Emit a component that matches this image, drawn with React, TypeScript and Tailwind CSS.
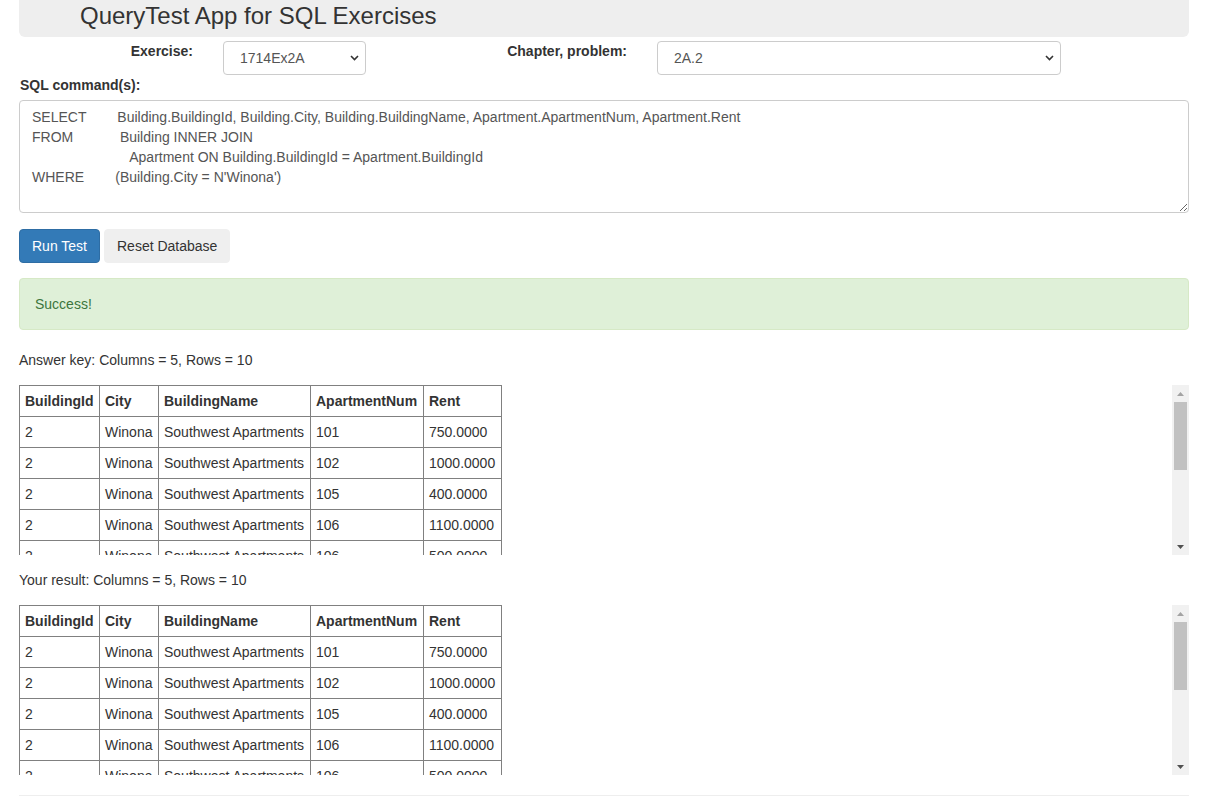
import React from "react";

const rows: [string, string, string, string, string][] = [
  ["2", "Winona", "Southwest Apartments", "101", "750.0000"],
  ["2", "Winona", "Southwest Apartments", "102", "1000.0000"],
  ["2", "Winona", "Southwest Apartments", "105", "400.0000"],
  ["2", "Winona", "Southwest Apartments", "106", "1100.0000"],
  ["2", "Winona", "Southwest Apartments", "106", "500.0000"],
  ["2", "Winona", "Southwest Apartments", "201", "800.0000"],
  ["2", "Winona", "Southwest Apartments", "202", "950.0000"],
  ["2", "Winona", "Southwest Apartments", "203", "700.0000"],
  ["2", "Winona", "Southwest Apartments", "204", "1200.0000"],
  ["2", "Winona", "Southwest Apartments", "205", "650.0000"],
];

const headers = ["BuildingId", "City", "BuildingName", "ApartmentNum", "Rent"];

function Scrollbar() {
  return (
    <div className="flex w-[17px] shrink-0 flex-col bg-[#f1f1f1]">
      <div className="flex h-[17px] items-center justify-center">
        <svg width="7" height="4" viewBox="0 0 7 4">
          <polygon points="0,4 7,4 3.5,0" fill="#a3a3a3" />
        </svg>
      </div>
      <div className="mx-[2px] h-[68px] bg-[#c1c1c1]" />
      <div className="flex-1" />
      <div className="flex h-[17px] items-center justify-center">
        <svg width="7" height="4" viewBox="0 0 7 4">
          <polygon points="0,0 7,0 3.5,4" fill="#505050" />
        </svg>
      </div>
    </div>
  );
}

function ResultTable() {
  return (
    <div className="flex h-[170px] w-[1170px]">
      <div className="flex-1 overflow-hidden">
        <table className="w-[482px] table-fixed border-collapse">
          <colgroup>
            <col className="w-[80px]" />
            <col className="w-[59px]" />
            <col className="w-[152px]" />
            <col className="w-[113px]" />
            <col className="w-[78px]" />
          </colgroup>
          <thead>
            <tr>
              {headers.map((h) => (
                <th
                  key={h}
                  className="whitespace-nowrap border border-[#808080] px-[5px] py-[5px] text-left font-bold"
                >
                  {h}
                </th>
              ))}
            </tr>
          </thead>
          <tbody>
            {rows.map((r, i) => (
              <tr key={i}>
                {r.map((c, j) => (
                  <td
                    key={j}
                    className="whitespace-nowrap border border-[#808080] px-[5px] py-[5px]"
                  >
                    {c}
                  </td>
                ))}
              </tr>
            ))}
          </tbody>
        </table>
      </div>
      <Scrollbar />
    </div>
  );
}

function Chevron() {
  return (
    <svg
      className="pointer-events-none absolute right-[7px] top-[14px]"
      width="9"
      height="6"
      viewBox="0 0 9 6"
    >
      <polyline
        points="1,1 4.5,4.5 8,1"
        fill="none"
        stroke="#333"
        strokeWidth="1.6"
      />
    </svg>
  );
}

const sql =
  "SELECT        Building.BuildingId, Building.City, Building.BuildingName, Apartment.ApartmentNum, Apartment.Rent\n" +
  "FROM            Building INNER JOIN\n" +
  "                         Apartment ON Building.BuildingId = Apartment.BuildingId\n" +
  "WHERE        (Building.City = N'Winona')";

export default function App() {
  return (
    <div className="min-h-screen bg-white font-['Liberation_Sans',Arial,sans-serif] text-[14px] leading-[20px] text-[#333]">
      <div className="ml-[19px] w-[1170px]">
        <div className="h-[37px] rounded-b-[6px] bg-[#eee] pl-[61px] pt-[3px]">
          <h1 className="text-[24px] font-normal leading-[26px] text-[#333]">
            QueryTest App for SQL Exercises
          </h1>
        </div>

        <div className="mt-[4px] flex h-[34px]">
          <label className="w-[174px] text-right font-bold">Exercise:</label>
          <div className="relative ml-[30px] w-[143px]">
            <select
              className="h-[34px] w-full appearance-none rounded-[4px] border border-[#ccc] bg-white pl-[16px] text-[14px] text-[#555] outline-none"
              defaultValue="1714Ex2A"
            >
              <option>1714Ex2A</option>
            </select>
            <Chevron />
          </div>
          <label className="w-[261px] text-right font-bold">
            Chapter, problem:
          </label>
          <div className="relative ml-[30px] w-[404px]">
            <select
              className="h-[34px] w-full appearance-none rounded-[4px] border border-[#ccc] bg-white pl-[16px] text-[14px] text-[#555] outline-none"
              defaultValue="2A.2"
            >
              <option>2A.2</option>
            </select>
            <Chevron />
          </div>
        </div>

        <div className="pl-[1px] font-bold">SQL command(s):</div>
        <textarea
          className="mt-[5px] block h-[113px] w-full rounded-[4px] border border-[#ccc] px-[12px] py-[6px] text-[14px] leading-[20px] text-[#555] outline-none"
          defaultValue={sql}
          spellCheck={false}
        />

        <div className="mt-[16px] flex gap-[4px]">
          <button className="h-[34px] rounded-[4px] border border-[#2e6da4] bg-[#337ab7] px-[12px] text-white">
            Run Test
          </button>
          <button className="h-[34px] rounded-[4px] border border-[#efefef] bg-[#efefef] px-[12px] text-[#333]">
            Reset Database
          </button>
        </div>

        <div className="mt-[15px] h-[52px] rounded-[4px] border border-[#d6e9c6] bg-[#dff0d8] px-[15px] py-[15px] text-[#3c763d]">
          Success!
        </div>

        <div className="mt-[20px]">Answer key: Columns = 5, Rows = 10</div>
        <div className="mt-[15px]">
          <ResultTable />
        </div>

        <div className="mt-[15px]">Your result: Columns = 5, Rows = 10</div>
        <div className="mt-[15px]">
          <ResultTable />
        </div>

        <hr className="mb-[20px] mt-[20px] border-t border-[#eee]" />
      </div>
    </div>
  );
}
